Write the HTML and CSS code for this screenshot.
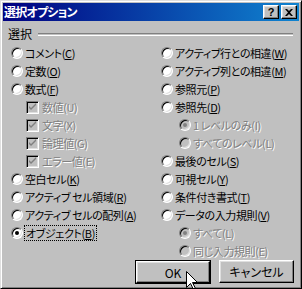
FILE: index.html
```html
<!DOCTYPE html>
<html lang="ja">
<head>
    <meta charset="UTF-8">
    <title>選択オプション</title>
    <link rel="stylesheet" href="styles.css">
</head>
<body>
    <div class="window">
        <div class="titlebar">
            <span class="title">選択オプション</span>
            <span class="cap-btn">?</span>
            <span class="cap-btn close">
                <svg width="8" height="7" viewBox="0 0 8 7"><path d="M0 0h2l2 2 2-2h2L5 3.5 8 7H6L4 5 2 7H0l3-3.5z" fill="#000"/></svg>
            </span>
        </div>

        <div class="group-head">
            <span class="group-label">選択</span>
            <span class="group-line"></span>
        </div>

        <div class="options">
            <div class="column">
                <div class="row"><span class="radio"></span><span class="label">コメント(<u>C</u>)</span></div>
                <div class="row"><span class="radio"></span><span class="label">定数(<u>O</u>)</span></div>
                <div class="row"><span class="radio"></span><span class="label">数式(<u>F</u>)</span></div>
                <div class="row sub"><span class="check"><svg width="9" height="9" viewBox="0 0 9 9"><path d="M1 3v2l2 2 5-5V0L3 5z" fill="#808080"/></svg></span><span class="label off">数値(U)</span></div>
                <div class="row sub"><span class="check"><svg width="9" height="9" viewBox="0 0 9 9"><path d="M1 3v2l2 2 5-5V0L3 5z" fill="#808080"/></svg></span><span class="label off">文字(X)</span></div>
                <div class="row sub"><span class="check"><svg width="9" height="9" viewBox="0 0 9 9"><path d="M1 3v2l2 2 5-5V0L3 5z" fill="#808080"/></svg></span><span class="label off">論理値(G)</span></div>
                <div class="row sub"><span class="check"><svg width="9" height="9" viewBox="0 0 9 9"><path d="M1 3v2l2 2 5-5V0L3 5z" fill="#808080"/></svg></span><span class="label off">エラー値(E)</span></div>
                <div class="row"><span class="radio"></span><span class="label">空白セル(<u>K</u>)</span></div>
                <div class="row"><span class="radio"></span><span class="label">アクティブ セル領域(<u>R</u>)</span></div>
                <div class="row"><span class="radio"></span><span class="label">アクティブ セルの配列(<u>A</u>)</span></div>
                <div class="row"><span class="radio on"></span><span class="label focus">オブジェクト(<u>B</u>)</span></div>
            </div>
            <div class="column">
                <div class="row"><span class="radio"></span><span class="label">アクティブ行との相違(<u>W</u>)</span></div>
                <div class="row"><span class="radio"></span><span class="label">アクティブ列との相違(<u>M</u>)</span></div>
                <div class="row"><span class="radio"></span><span class="label">参照元(<u>P</u>)</span></div>
                <div class="row"><span class="radio"></span><span class="label">参照先(<u>D</u>)</span></div>
                <div class="row sub-r"><span class="radio off on"></span><span class="label off">1 レベルのみ(I)</span></div>
                <div class="row sub-r"><span class="radio off"></span><span class="label off">すべてのレベル(L)</span></div>
                <div class="row"><span class="radio"></span><span class="label">最後のセル(<u>S</u>)</span></div>
                <div class="row"><span class="radio"></span><span class="label">可視セル(<u>Y</u>)</span></div>
                <div class="row"><span class="radio"></span><span class="label">条件付き書式(<u>T</u>)</span></div>
                <div class="row"><span class="radio"></span><span class="label">データの入力規則(<u>V</u>)</span></div>
                <div class="row sub-r"><span class="radio off on"></span><span class="label off">すべて(L)</span></div>
                <div class="row sub-r"><span class="radio off"></span><span class="label off">同じ入力規則(E)</span></div>
            </div>
        </div>

        <div class="buttons">
            <span class="button default">OK</span>
            <span class="button">キャンセル</span>
        </div>

        <svg class="cursor" width="13" height="20" viewBox="0 0 13 20">
            <path d="M0.5 0.5V16.5L4.5 12.5L7.5 18.5L9.5 17.5L6.5 11.5H11.5Z" fill="#fff" stroke="#000"/>
        </svg>
    </div>
</body>
</html>
```

FILE: styles.css
```css
body {
    margin: 0;
    font-family: "Noto Sans CJK JP", "Noto Sans", sans-serif;
    font-size: 11px;
    color: #000;
    background: #c0c0c0;
}

.window {
    position: relative;
    width: 302px;
    height: 289px;
    box-sizing: border-box;
    padding: 2px;
    background: #c0c0c0;
    border: 1px solid;
    border-color: #dfdfdf #000 #000 #dfdfdf;
    box-shadow: inset 1px 1px 0 #fff, inset -1px -1px 0 #808080;
    overflow: hidden;
}

.titlebar {
    display: flex;
    align-items: center;
    height: 18px;
    padding: 0 2px 0 1px;
    background: linear-gradient(to right, #000080, #1084d0);
}

.title {
    flex: 1;
    color: #fff;
    font-weight: bold;
    font-size: 12px;
    letter-spacing: -0.8px;
    font-feature-settings: "palt";
    line-height: 18px;
}

.cap-btn {
    display: flex;
    align-items: center;
    justify-content: center;
    width: 16px;
    height: 14px;
    box-sizing: border-box;
    background: #c0c0c0;
    border: 1px solid;
    border-color: #fff #000 #000 #fff;
    box-shadow: inset -1px -1px 0 #808080, inset 1px 1px 0 #dfdfdf;
    font-family: "Liberation Sans", sans-serif;
    font-weight: bold;
    font-size: 11px;
    line-height: 12px;
}

.cap-btn.close {
    margin-left: 2px;
}

.group-head {
    display: flex;
    align-items: center;
    height: 20px;
    margin-top: 3px;
    padding: 0 6px 0 5px;
    font-size: 12px;
}

.group-label {
    line-height: 14px;
    padding-right: 6px;
}

.group-line {
    flex: 1;
    height: 1px;
    border-top: 1px solid #808080;
    border-bottom: 1px solid #fff;
}

.options {
    display: grid;
    grid-template-columns: 150px 1fr;
    padding-left: 8px;
}

.row {
    display: flex;
    align-items: center;
    height: 18px;
    white-space: nowrap;
}

.row.sub {
    padding-left: 15px;
}

.row.sub-r {
    padding-left: 18px;
}

.label {
    margin-left: 1px;
    letter-spacing: -0.4px;
    font-feature-settings: "palt";
    line-height: 14px;
}

.label.off {
    color: #808080;
    text-shadow: 1px 1px 0 #fff;
}

.label.focus {
    outline: 1px dotted #000;
    outline-offset: 0;
    padding: 0 1px;
}

.radio {
    position: relative;
    width: 12px;
    height: 12px;
    margin-right: 1px;
    flex: none;
    box-sizing: border-box;
    border-radius: 50%;
    border: 1px solid;
    border-color: #808080 #fff #fff #808080;
    background: #fff;
    box-shadow: inset 1px 1px 0 #000, inset -1px -1px 0 #dfdfdf;
}

.radio.off {
    background: #c0c0c0;
}

.radio.on::after {
    content: "";
    position: absolute;
    left: 3px;
    top: 3px;
    width: 4px;
    height: 4px;
    border-radius: 50%;
    background: #000;
}

.radio.off.on::after {
    background: #808080;
}

.check {
    display: flex;
    align-items: center;
    justify-content: center;
    width: 13px;
    height: 13px;
    margin-right: 2px;
    flex: none;
    box-sizing: border-box;
    border: 1px solid;
    border-color: #808080 #fff #fff #808080;
    background: #c0c0c0;
    box-shadow: inset 1px 1px 0 #000, inset -1px -1px 0 #dfdfdf;
}

.buttons {
    display: flex;
    justify-content: flex-end;
    gap: 9px;
    margin-top: 0;
    padding-right: 5px;
}

.button {
    display: flex;
    align-items: center;
    justify-content: center;
    width: 75px;
    height: 23px;
    box-sizing: border-box;
    border: 1px solid;
    border-color: #fff #000 #000 #fff;
    box-shadow: inset -1px -1px 0 #808080, inset 1px 1px 0 #dfdfdf;
    font-size: 12px;
    font-feature-settings: "palt";
}

.button.default {
    outline: 1px solid #000;
    width: 74px;
    height: 22px;
    margin-top: 1px;
}

.cursor {
    position: absolute;
    left: 185px;
    top: 270px;
}
```
